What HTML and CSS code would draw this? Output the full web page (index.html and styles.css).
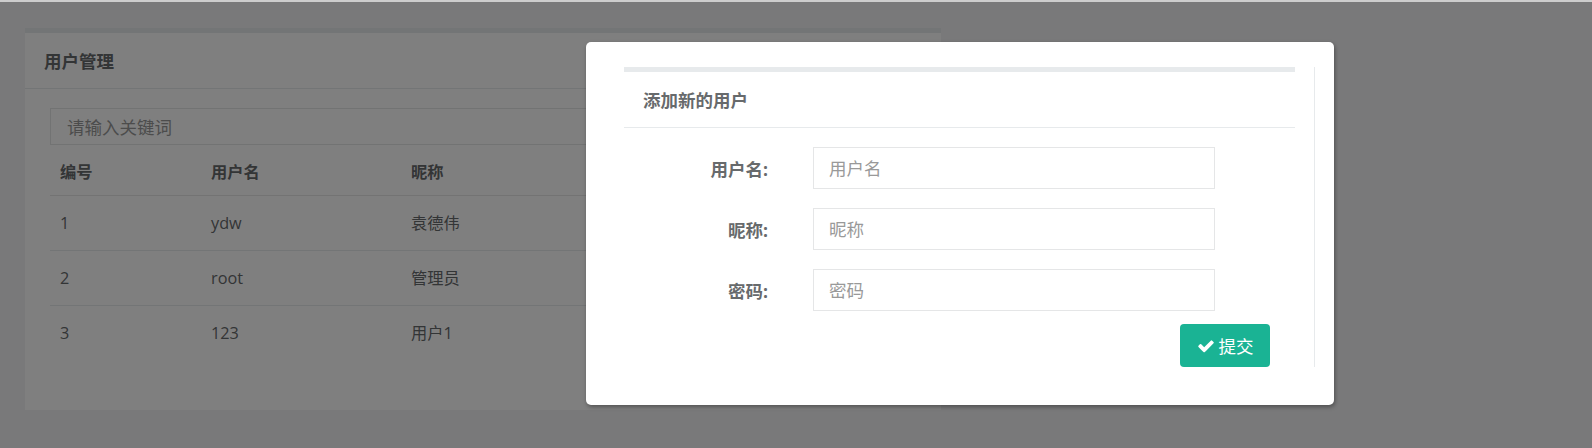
FILE: index.html
```html
<!DOCTYPE html>
<html lang="zh-CN">

<head>
    <meta charset="UTF-8">
    <meta name="viewport" content="width=device-width, initial-scale=1.0">
    <title>用户管理</title>

    <link rel="stylesheet" href="styles.css">
</head>

<body>
    <div class="topline"></div>
    <div class="wrapper">
        <div class="ibox panel">
            <div class="ibox-title">
                <h5>用户管理</h5>
            </div>
            <div class="ibox-content">
                <input type="text" class="search" placeholder="请输入关键词">
                <table class="table">
                    <thead>
                        <tr>
                            <th class="col-id">编号</th>
                            <th class="col-name">用户名</th>
                            <th>昵称</th>
                        </tr>
                    </thead>
                    <tbody>
                        <tr>
                            <td>1</td>
                            <td>ydw</td>
                            <td>袁德伟</td>
                        </tr>
                        <tr>
                            <td>2</td>
                            <td>root</td>
                            <td>管理员</td>
                        </tr>
                        <tr>
                            <td>3</td>
                            <td>123</td>
                            <td>用户1</td>
                        </tr>
                    </tbody>
                </table>
            </div>
        </div>
    </div>

    <!-- 遮挡层 -->
    <div class="mask"></div>

    <!-- 添加用户模态框 -->
    <div class="modal">
        <div class="modal-col">
            <div class="ibox">
                <div class="ibox-title">
                    <h5>添加新的用户</h5>
                </div>
                <div class="ibox-content form">
                    <div class="form-group">
                        <label for="username">用户名:</label>
                        <input type="text" id="username" class="form-control" placeholder="用户名">
                    </div>
                    <div class="form-group">
                        <label for="nickname">昵称:</label>
                        <input type="text" id="nickname" class="form-control" placeholder="昵称">
                    </div>
                    <div class="form-group">
                        <label for="password">密码:</label>
                        <input type="password" id="password" class="form-control" placeholder="密码">
                    </div>
                    <div class="form-actions">
                        <button class="btn-primary">
                            <svg class="icon-check" viewBox="0 0 1792 1792" width="18" height="18">
                                <path fill="#fff" d="M1671 566q0 40-28 68l-724 724-136 136q-28 28-68 28t-68-28l-136-136-362-362q-28-28-28-68t28-68l136-136q28-28 68-28t68 28l294 295 656-657q28-28 68-28t68 28l136 136q28 28 28 68z"/>
                            </svg>
                            提交
                        </button>
                    </div>
                </div>
            </div>
        </div>
    </div>
</body>

</html>
```

FILE: styles.css
```css
* {
    box-sizing: border-box;
}

body {
    margin: 0;
    min-height: 448px;
    background-color: #f3f3f4;
    font-family: "Open Sans", "Noto Sans CJK SC", sans-serif;
    font-size: 16.25px;
    color: #676a6c;
}

.topline {
    position: relative;
    z-index: 20;
    height: 2px;
    background-color: #cdcdcd;
}

.wrapper {
    padding: 26px 25px 0;
}

.ibox {
    background-color: #fff;
    border-top: 5px solid #e7eaec;
}

.panel {
    width: 916px;
}

.ibox-title {
    display: flex;
    align-items: center;
    height: 56px;
    padding-left: 19px;
    border-bottom: 1px solid #e7eaec;
}

.ibox-title h5 {
    margin: 0;
    font-size: 17.5px;
    font-weight: 700;
    color: #676a6c;
}

.ibox-content {
    padding: 19px 25px 50px;
}

.search {
    display: block;
    width: 100%;
    height: 37px;
    margin: 0;
    padding: 0 16px;
    border: 1px solid #e5e6e7;
    outline: none;
    font-family: inherit;
    font-size: 17.5px;
}

.search::placeholder,
.form-control::placeholder {
    color: #999;
}

.table {
    width: 100%;
    margin-top: 5px;
    border-collapse: separate;
    border-spacing: 0;
}

.table th,
.table td {
    padding: 0 10px;
    line-height: 25px;
    text-align: left;
    white-space: nowrap;
}

.table th {
    padding-top: 10px;
    padding-bottom: 10px;
    font-weight: 700;
    border-bottom: 1px solid #e7e7e7;
}

.table td {
    padding-top: 14.5px;
    padding-bottom: 14.5px;
}

.table tbody tr+tr td {
    border-top: 1px solid #e7eaec;
}

.col-id {
    width: 151px;
}

.col-name {
    width: 200px;
}

.mask {
    position: fixed;
    top: 0;
    left: 0;
    width: 100%;
    height: 100%;
    background: rgba(0, 0, 0, .5);
    z-index: 10;
}

.modal {
    position: absolute;
    top: 42px;
    left: 586px;
    width: 748px;
    padding: 25px 19px 38px 38px;
    background-color: #fff;
    border-radius: 5px;
    box-shadow: 1px 2px 4px rgba(0, 0, 0, .35);
    z-index: 30;
}

.modal-col {
    padding-right: 19px;
    border-right: 1px solid #e7eaec;
}

.form {
    padding: 19px 25px 0;
}

.form-group {
    display: flex;
    align-items: center;
    margin-bottom: 19px;
}

.form-group label {
    width: 119px;
    margin-right: 45px;
    text-align: right;
    font-size: 17.5px;
    font-weight: 700;
    color: #676a6c;
}

.form-control {
    width: 402px;
    height: 42px;
    padding: 0 15px;
    border: 1px solid #e5e6e7;
    outline: none;
    font-family: inherit;
    font-size: 17.5px;
    color: #676a6c;
}

.form-actions {
    display: flex;
    justify-content: flex-end;
    margin-top: -6px;
}

.btn-primary {
    display: flex;
    align-items: center;
    justify-content: center;
    gap: 4px;
    width: 90px;
    height: 43px;
    padding: 0;
    border: none;
    border-radius: 4px;
    background-color: #1ab394;
    color: #fff;
    font-family: inherit;
    font-size: 17.5px;
}
```
